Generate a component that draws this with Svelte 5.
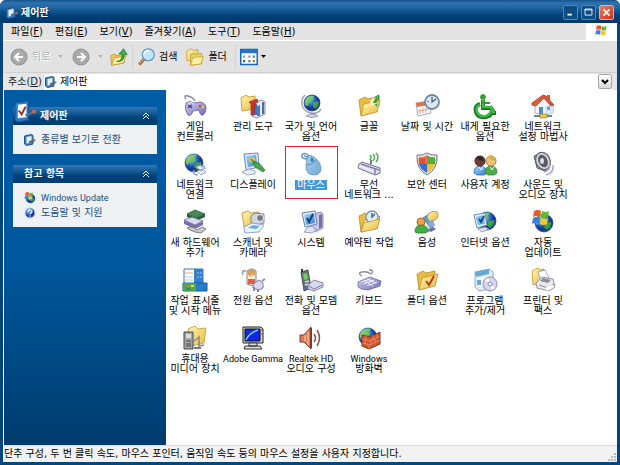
<script lang="ts">
	const folder = '<path d="M2 6l6-3 3 2 9-2v14L4 22z" fill="#e9bd45" stroke="#b98a26" stroke-width=".8"/><path d="M4 22l3-12 16-4-3 12z" fill="url(#gold)" stroke="#bd9030" stroke-width=".8"/>';
	const globe = '<circle cx="11" cy="11" r="9" fill="url(#sea)" stroke="#17479a" stroke-width=".7"/><path d="M5 5c3-3 7-3 9-2l-2 3 1 2-3 3-3-1-3 3c-2-3-1-6 1-8zM13 11l5-1c1 3-1 6-4 8l-3-3z" fill="url(#land)"/>';
	const monitor = '<path d="M3 3l13-2 2 13-12 3z" fill="#e8eef8" stroke="#6c7fae"/><path d="M5 5l10-2 1 10-9 2z" fill="url(#screen)"/><path d="M9 17l5-1 1 3 4 1-7 3-7-1z" fill="#dfe3f0" stroke="#8791ae" stroke-width=".8"/>';
	const flag = '<path d="M4 3q4-2 7 0l-1 6q-4-2-7 0z" fill="#ee5a24"/><path d="M12 3q4 2 7 0l-1 6q-4 2-7 0z" fill="#66b62e"/><path d="M3 10q4-2 7 0l-1 6q-4-2-7 0z" fill="#3c7fe0"/><path d="M11 10q4 2 7 0l-1 6q-4 2-7 0z" fill="#fbc42c"/>';
	const panel = '<path d="M1 3l14-2v20L4 23l-3-2z" fill="#2c7bc8" stroke="#1c4f91"/><path d="M4 5l9-1v14l-9 1z" fill="#fff"/><path d="M5 11l3 4 4-8" fill="none" stroke="#a72b2b" stroke-width="2"/><path d="M12 16l10-4" stroke="#5c7189" stroke-width="2.5"/><circle cx="21" cy="12" r="2" fill="#df613a"/>';
	const panelSmall = '<path d="M1 4l14-3 3 2v17L5 23l-4-3z" fill="#3c86cc" stroke="#1c4f91" stroke-width="2"/><path d="M5 6l10-2v13L5 19z" fill="#e6f2fc"/><path d="M10 17l12-5" stroke="#4c6685" stroke-width="4"/><circle cx="21" cy="12" r="2" fill="#d97a58"/>';
	const check = '<path d="M8 8l2 4 4-8" fill="none" stroke="#143d82" stroke-width="2"/>';

	const art: Record<string, string> = {
		panel,
		panelSmall,
		flag,
		game: '<path d="M3 5q-3-4 2-3t7 5" fill="none" stroke="#8a8aa8" stroke-width="1.5"/><path d="M3 9q4-3 8 0l6-1q6 1 6 6t-3 7q-3 1-4-5l-6 1q-2 6-5 4Q1 16 3 9z" fill="url(#violet)" stroke="#5f5b9d" stroke-width=".8"/><path d="M5 11l4 3M9 11l-4 3" stroke="#443f83" stroke-width="1.5"/><circle cx="17" cy="12" r="1.3" fill="#c44"/><circle cx="20" cy="13" r="1.3" fill="#e7c844"/><path d="M5 9q3-2 6 1" fill="none" stroke="#deddf8"/>',
		tools: '<path d="M0 4l5-3 3 2 6-1v13l-13 2z" fill="url(#gold)" stroke="#bb8b2c" stroke-width=".8"/><path d="M12 9l9-3 3 2v12l-8 4-5-2z" fill="#e6e9f6" stroke="#666ea0" stroke-width=".8"/><path d="M13 10h3v11h-3zM21 8h2v12h-2z" fill="#5368b8"/><path d="M8 8l8-3 1 3-3 2-1 11h-3V10z" fill="#c4392b" stroke="#842016" stroke-width=".6"/><path d="M16 12l3-1v11h-3z" fill="#3c80c7"/>',
		region: '<path d="M6 1C1 6 2 15 9 18s12 0 13-3" fill="none" stroke="#a0a5b8" stroke-width="1.5"/><circle cx="13" cy="9" r="8" fill="url(#sea)" stroke="#173b84" stroke-width=".7"/><path d="M8 4q3-3 7-2l-1 4-4 2-1 4-3-1q-1-4 2-7zM14 9l5-2q2 4-2 8l-3-2z" fill="url(#land)"/><path d="M12 19h3v2h-3z" fill="#87904f"/><path d="M7 22q6-4 12 0-6 3-12 0z" fill="#d7d9e3" stroke="#888ea4" stroke-width=".8"/>',
		fonts: '<path d="M18 3l4-2v11l-5 2z" fill="#2ea636" stroke="#167b23" stroke-width=".7"/>' + folder + '<path d="M13 7l3-3 2 1 3-3-1 7-6 3z" fill="#fff5bb"/><path d="M16 8l5-7-1 12z" fill="#36a637"/><path d="M6 13l14-4" stroke="#fff8bd"/>',
		clock: '<path d="M1 9l13-2 2 12-13 3z" fill="#fff" stroke="#8d93a8" stroke-width=".8"/><path d="M1 9l13-2 1 4-13 2z" fill="#df7444"/><path d="M5 15v5M8 14v5M11 14v5M3 17l11-2" stroke="#e4a084"/><circle cx="17" cy="8" r="7" fill="#dceaf7" stroke="#74899e" stroke-width="1.8"/><path d="M17 3v5l4-3" fill="none" stroke="#355878" stroke-width="1.2"/><path d="M12 7l2 1" stroke="#5f7c97"/>',
		access: '<circle cx="10" cy="3" r="2.5" fill="#32a635" stroke="#17751c" stroke-width=".6"/><path d="M10 6v8h8l3 5h2" fill="none" stroke="#15771e" stroke-width="4"/><path d="M7 10q-6 2-4 8t10 5q5-1 6-6" fill="none" stroke="#15771e" stroke-width="4"/><path d="M10 6v7h8l2 5h2M7 11q-5 2-3 7t9 4q4-1 5-5" fill="none" stroke="#3fb943" stroke-width="2.5"/><path d="M10 9h7" stroke="#2d9e31" stroke-width="2"/>',
		home: '<path d="M4 9l8-5 10 6v9l-9 2-9-2z" fill="#f8f8ff" stroke="#8591b0" stroke-width=".7"/><path d="M14 12l8-2v9l-8 2z" fill="#d7e5f4"/><path d="M1 9L12 1l3 1 8 9-3 1-7-8-8 8-4-1z" fill="#e35b38" stroke="#993420" stroke-width=".7"/><path d="M12 2l3 0 7 9-2 1-8-9z" fill="#d9522f"/><path d="M16 1h3v6l-3-3z" fill="#d45939"/><path d="M8 13h4v7H8z" fill="#4a8dcc"/><path d="M16 13l3-1v4h-3z" fill="#6ba0d4"/><path d="M3 22h18" stroke="#6d839b" stroke-width="2"/><path d="M9 20h7v4H9z" fill="#e9c849" stroke="#807a48" stroke-width=".6"/>',
		network: globe + '<path d="M13 15l5-2 4 3-4 3zM14 19l6-2 3 3-5 3z" fill="#e7ecf9" stroke="#8593b2" stroke-width=".8"/><path d="M11 18q-2 5 4 5M18 15q4-2 4 2" fill="none" stroke="#9aa8bd" stroke-width="1.5"/>',
		display: '<path d="M3 2l14-1 1 14-13 3z" fill="#dae7fb" stroke="#586da3" stroke-width=".8"/><path d="M5 4l10-1 1 10-9 2z" fill="url(#screen)"/><path d="M7 7l5-2 3 3-4 3z" fill="#f4c34b"/><path d="M1 20l7-3 6 2v3l-8 1z" fill="#e7ebf4" stroke="#8b97b5" stroke-width=".8"/><path d="M10 7l4 3-1 2zM14 10l4 1 6 7-2 2-8-5-2-3z" fill="#49a849" stroke="#227a2d" stroke-width=".7"/>',
		mouse: '<path d="M9 7C5 7 2 6 3 3s7-1 6 1-4 0-3-1" fill="none" stroke="#6298c5" stroke-width="1.5"/><path d="M8 6q2-4 5-2 8 4 9 12 0 7-7 7-8 0-8-9z" fill="url(#mouse)" stroke="#578fbd" stroke-width=".8"/><path d="M7 13q7 0 11-6M12 5l4 5" fill="none" stroke="#5d91bb"/><ellipse cx="13" cy="8" rx="1.5" ry="2.3" fill="#4782b0"/>',
		wireless: '<path d="M2 12l3-2 18 6v5l-5 2-17-7z" fill="#dfe0f2" stroke="#6e719a"/><path d="M4 12l18 6M18 17v5" stroke="#8080b0" stroke-width="1.5"/><path d="M14 12v-4" stroke="#777" stroke-width="2"/><path d="M13 3q2 2 0 5M16 2q3 3 0 7M19 1q4 4 0 9" fill="none" stroke="#3eb348" stroke-width="1.4"/><path d="M3 14l12 5" stroke="#fff"/>',
		shield: '<path d="M12 1q5 3 10 2 1 14-10 20Q1 17 2 3q5 1 10-2z" fill="#f0f0f0" stroke="#667286"/><path d="M12 3v9H4q-1-4 0-7 5 1 8-2z" fill="#ea4f2b"/><path d="M12 3q3 3 8 2 1 3 0 7h-8z" fill="#55ad3b"/><path d="M4 12h8v9q-7-4-8-9z" fill="#326fcb"/><path d="M12 12h8q-1 5-8 9z" fill="#f5bd2b"/><path d="M4 5q4 1 7-1v7" fill="none" stroke="#f79b77"/>',
		users: '<path d="M1 21q0-7 6-7t7 7l-3 2H4z" fill="url(#screen)" stroke="#235da6" stroke-width=".7"/><circle cx="7" cy="9" r="5" fill="#6e3d2c" stroke="#352b2a"/><path d="M2 8q3-7 8-2l1 3Q6 9 4 6z" fill="#332824"/><path d="M12 21q0-7 6-7t6 7l-3 2h-6z" fill="#4eac45" stroke="#277a30" stroke-width=".7"/><circle cx="18" cy="9" r="5" fill="#efc17b" stroke="#a97735"/><path d="M13 8q2-7 8-3l2 4q-5 0-7-3z" fill="#dcb049"/><path d="M6 15l2 3 2-3M17 15l2 3 2-3" fill="none" stroke="#fff"/>',
		sound: '<path d="M3 4l9-3 5 15-3 3-8-3z" fill="#b5b7c0" stroke="#555761"/><ellipse cx="12" cy="9" rx="7" ry="9" transform="rotate(-25 12 9)" fill="#d7d9df" stroke="#666875" stroke-width="1.3"/><ellipse cx="12" cy="9" rx="4.5" ry="6.5" transform="rotate(-25 12 9)" fill="#585a65"/><ellipse cx="11" cy="9" rx="2" ry="3" fill="#d9dce5"/><path d="M13 20q6-1 6-7M15 23q8-2 7-10" fill="none" stroke="#a5a4d3" stroke-width="1.5"/>',
		hardware: '<path d="M4 4l8-4 10 4-9 4z" fill="#468852" stroke="#244f31" stroke-width=".7"/><path d="M4 4v3l9 4 9-4V4l-9 4z" fill="#285f3d"/><path d="M1 10l8-3 11 4-8 4z" fill="#d9d8f1" stroke="#65618c" stroke-width=".7"/><path d="M1 10v4l11 5 8-4v-4l-8 4z" fill="#7872ac"/><path d="M4 18q6-3 10 2l5-3 4 2-5 4-6-1-5-2z" fill="#c9cace" stroke="#666" stroke-width=".8"/>',
		scanner: '<path d="M1 3l6-2 3 2 8-1v13L3 17z" fill="url(#gold)" stroke="#bd8d2c" stroke-width=".8"/><path d="M10 6l4-3 9 1v9l-8 2-5-3z" fill="#d4d5db" stroke="#70717e" stroke-width=".8"/><circle cx="19" cy="8" r="3.5" fill="#73798a" stroke="#eee"/><path d="M3 17l8-4 12 2-5 7-14 1z" fill="#f0f4fc" stroke="#7d92b6" stroke-width=".8"/><path d="M7 18l5-3 7 1-4 3z" fill="#64aee8"/>',
		system: '<path d="M14 4l8-2 2 2v14l-8 4-4-2z" fill="#c5c7e4" stroke="#6a6897" stroke-width=".7"/><path d="M20 5l3-1v13l-3 2z" fill="#7470a9"/>' + monitor + check,
		tasks: folder + '<circle cx="15" cy="7" r="6" fill="#e2eef4" stroke="#8299a6" stroke-width="1.5"/><path d="M15 3v4l3-3" fill="none" stroke="#456d8d" stroke-width="1.5"/><path d="M4 22l3-9 16-4-3 10z" fill="url(#gold)" stroke="#bd9030" stroke-width=".8"/>',
		speech: '<path d="M8 8l8-5 4 4-5 10z" fill="#50a6de" stroke="#327bab"/><path d="M14 3q4-3 8-1 3 5-2 8l-5 2-3-5z" fill="url(#gold)" stroke="#bd852d" stroke-width=".8"/><path d="M12 15l5-6 3 6-4 5z" fill="#86a9cd"/><circle cx="6" cy="12" r="4" fill="#f2a14a" stroke="#b66423"/><path d="M0 22q0-7 6-7t8 6l-4 2H3z" fill="#48ae42" stroke="#238034" stroke-width=".8"/><path d="M12 20l6-3 3 2-5 3z" fill="#706daf"/>',
		internet: '<g transform="translate(3 0)">' + globe + '</g><path d="M1 5l11-2 2 12-10 3z" fill="#e8f1fb" stroke="#6787b3"/><path d="M3 7l8-2 1 9-7 1z" fill="#73b9ea"/><path d="M6 9l2 3 3-6" fill="none" stroke="#17488c" stroke-width="2"/><path d="M5 19l7-2 4 2-7 3z" fill="#dce0ee" stroke="#848ca8" stroke-width=".8"/>',
		update: '<g transform="translate(2 2)">' + globe + '</g><g transform="translate(-1 -2)">' + flag + '</g>',
		taskbar: '<path d="M1 1h19v15H1z" fill="#fff" stroke="#2f79bf"/><path d="M11 1h9v14h-9z" fill="#347fc5"/><path d="M2 5h8" stroke="#f0a46e"/><path d="M2 9h8M2 12h8" stroke="#a9cbe6"/><path d="M14 5h2M17 5h2M14 9h2M17 9h2" stroke="#9cc9ee"/><path d="M0 15h24v8H0z" fill="#247fcb" stroke="#185b9e"/><path d="M0 15h13v8H0z" fill="#4ba643"/><path d="M4 17h3v2H4z" fill="#ed6932"/><path d="M8 17h3v2H8z" fill="#e9d84c"/><path d="M4 20h3v2H4z" fill="#2876c9"/>',
		power: '<path d="M2 7Q0 2 5 3" fill="none" stroke="#aaa" stroke-width="2"/><path d="M6 3q5-4 9 0v13q-5 3-9 0z" fill="#eee" stroke="#8c8177"/><path d="M7 3q4-3 7 0v4q-4 2-7 0z" fill="#d29b68"/><path d="M7 11h7v5H7z" fill="#dc6147"/><path d="M9 9l3-4" stroke="#f7c52e" stroke-width="2"/><path d="M12 16l6-4 4 3v5l-4 2-6-2z" fill="#d6d7ee" stroke="#7778a6"/><path d="M13 19v4M17 21v3M21 13l3-2" stroke="#8687b2" stroke-width="2"/>',
		phone: '<path d="M3 1v6" stroke="#333" stroke-width="2"/><path d="M2 4l7-2 3 18-7 3z" fill="#65717b" stroke="#354049" stroke-width=".8"/><path d="M4 6l4-1 1 6-4 1z" fill="#71ce54"/><path d="M6 14l4-1M6 17l4-1" stroke="#ddd" stroke-width="1.5"/><path d="M9 17l6-5 9 3v4l-9 4-6-2z" fill="#d8d8f0" stroke="#6b6797" stroke-width=".8"/><path d="M10 18l5 3 8-4" fill="none" stroke="#7975ae"/>',
		keyboard: '<path d="M5 8Q0 5 5 4t9 2q4-4-2-4" fill="none" stroke="#888ba4" stroke-width="1.3"/><path d="M1 14l12-5 11 4-1 5-12 4q-10-1-10-4z" fill="url(#violet)" stroke="#686797" stroke-width=".8"/><path d="M4 14l9-3M7 16l10-4M10 18l10-4M8 13l8 5M12 12l7 3" stroke="#f5f5ff" stroke-width="1"/>',
		options: folder + '<path d="M11 13l3 4 5-9" fill="none" stroke="#b93725" stroke-width="2"/>',
		programs: '<path d="M2 4l14-3 4 3v16L6 23l-4-4z" fill="#e4edf7" stroke="#7995b6" stroke-width=".8"/><path d="M2 4l14-3v5L3 9z" fill="#67a8d6"/><path d="M5 10l11-2v9L5 19z" fill="#fff"/><path d="M4 12h4v5H4z" fill="#64a8dc"/><circle cx="17" cy="16" r="7" fill="#d6d6f0" stroke="#8b8ab9"/><path d="M17 16l-5-4 3-2zM17 16l5 4-3 2z" fill="#fff"/><circle cx="17" cy="16" r="2" fill="#fff" stroke="#8588aa"/>',
		printer: '<path d="M1 3l6-3 2 2 4-1v13L2 17z" fill="url(#gold)" stroke="#bd9030" stroke-width=".8"/><path d="M7 4l7-2 4 8-8 3z" fill="#fff" stroke="#7f9bb3" stroke-width=".8"/><path d="M5 15l6-6 11 2 2 8-6 4-12-3z" fill="#e9e9ed" stroke="#7c7d87" stroke-width=".8"/><path d="M9 13l3-3 8 2-3 3z" fill="#888b97"/><path d="M8 17l9 3 6-4" fill="none" stroke="#8d8e99"/><path d="M14 20l7-3 2 2-7 4z" fill="#fff"/>',
		media: '<path d="M5 3l7-3 3 3 8-1-2 15-12 3z" fill="url(#gold)" stroke="#c09431" stroke-width=".8"/><path d="M1 6h9v17H1z" fill="#a3a5a6" stroke="#454a4c"/><path d="M3 8h5v4H3z" fill="#ddd"/><path d="M3 15h5M3 18h5M3 20h5" stroke="#434849"/><path d="M11 15l5-4v9l5-1" fill="none" stroke="#888" stroke-width="1.5"/><path d="M11 21h7v2h-7z" fill="#777"/>',
		gamma: '<path d="M2 1h18l2 2v14H2z" fill="#d7d7d7" stroke="#222"/><path d="M4 3h15v12H4z" fill="#1026e0" stroke="#111"/><path d="M5 14Q8 7 17 4" fill="none" stroke="#7ad2ff" stroke-width="1.5"/><path d="M8 17h8v3H8zM4 20h15l2 3H3z" fill="#ddd" stroke="#333"/><path d="M20 4h2M20 8h2" stroke="#555"/>',
		realtek: '<path d="M1 9h4l7-8v22l-7-7H1z" fill="#df7b55" stroke="#753829"/><path d="M6 9v7M9 6v13" stroke="#f6b590" stroke-width="1.5"/><path d="M12 2v20" stroke="#843928" stroke-width="2"/><path d="M15 8q3 4 0 8M18 4q5 8 0 16" fill="none" stroke="#8c5040" stroke-width="1.5"/>',
		firewall: globe + '<path d="M5 9l8 2 10-5v12l-11 5-7-3z" fill="#d0552c" stroke="#81341e"/><path d="M5 13l8 2 10-5M5 17l8 2 10-5M9 10v4M8 14v4M16 9v5M20 8v4M18 13v4M14 14v5M12 19v4" fill="none" stroke="#f3a67c" stroke-width=".6"/>',
		search: '<path d="M10 14l-7 8" stroke="#9a5839" stroke-width="4"/><path d="M10 14l-7 7" stroke="#d99461" stroke-width="2"/><circle cx="15" cy="9" r="8" fill="#bfe6fa" stroke="#5b8dbb" stroke-width="1.5"/><path d="M9 9q1-6 7-5" fill="none" stroke="#fff" stroke-width="2"/>',
		folders: '<path d="M1 4l6-3 3 2 6-1v13L1 17z" fill="url(#gold)" stroke="#c69b32"/><path d="M6 9l5-2 2 2 8-2v14L6 23z" fill="#edcf61" stroke="#c69b32"/><path d="M6 23l3-10 14-2-3 10z" fill="#fff1a4" stroke="#c69b32"/>',
		up: '<path d="M1 10l5-2 3 2 10-2v12L2 23z" fill="#e9c753" stroke="#b99939"/><path d="M2 23l4-10 15-2-3 9z" fill="#fff0a1" stroke="#b99939"/><path d="M9 18q8-1 7-10h-4l6-7 5 8h-4q0 10-10 9z" fill="#3fb144" stroke="#157b26"/>',
		help: '<circle cx="12" cy="12" r="10" fill="url(#sea)" stroke="#bacff0" stroke-width="2"/><path d="M8 9q1-4 5-3 5 1 2 5l-3 3" fill="none" stroke="#fff" stroke-width="2.5"/><circle cx="12" cy="18" r="1.5" fill="#fff"/>',
		views: '<path d="M1 2h22v20H1z" fill="#fff" stroke="#1766b9" stroke-width="2"/><path d="M1 2h22v5H1z" fill="#2475ca"/><path d="M4 10h3v3H4z" fill="#7da9c4"/><path d="M11 10h3v3h-3z" fill="#dd816e"/><path d="M17 10h3v3h-3z" fill="#4f80c2"/><path d="M4 16h3v3H4z" fill="#405f9f"/><path d="M11 16h3v3h-3z" fill="#509158"/><path d="M17 16h3v3h-3z" fill="#a08a3a"/>'
	};

	const menus = [
		['파일', 'F'], ['편집', 'E'], ['보기', 'V'], ['즐겨찾기', 'A'], ['도구', 'T'], ['도움말', 'H']
	];

	const items = [
		{ icon: 'game', lines: ['게임', '컨트롤러'] },
		{ icon: 'tools', lines: ['관리 도구'] },
		{ icon: 'region', lines: ['국가 및 언어', '옵션'] },
		{ icon: 'fonts', lines: ['글꼴'] },
		{ icon: 'clock', lines: ['날짜 및 시간'] },
		{ icon: 'access', lines: ['내게 필요한', '옵션'] },
		{ icon: 'home', lines: ['네트워크', '설정 마법사'] },
		{ icon: 'network', lines: ['네트워크', '연결'] },
		{ icon: 'display', lines: ['디스플레이'] },
		{ icon: 'mouse', lines: ['마우스'] },
		{ icon: 'wireless', lines: ['무선', '네트워크 ...'] },
		{ icon: 'shield', lines: ['보안 센터'] },
		{ icon: 'users', lines: ['사용자 계정'] },
		{ icon: 'sound', lines: ['사운드 및', '오디오 장치'] },
		{ icon: 'hardware', lines: ['새 하드웨어', '추가'] },
		{ icon: 'scanner', lines: ['스캐너 및', '카메라'] },
		{ icon: 'system', lines: ['시스템'] },
		{ icon: 'tasks', lines: ['예약된 작업'] },
		{ icon: 'speech', lines: ['음성'] },
		{ icon: 'internet', lines: ['인터넷 옵션'] },
		{ icon: 'update', lines: ['자동', '업데이트'] },
		{ icon: 'taskbar', lines: ['작업 표시줄', '및 시작 메뉴'] },
		{ icon: 'power', lines: ['전원 옵션'] },
		{ icon: 'phone', lines: ['전화 및 모뎀', '옵션'] },
		{ icon: 'keyboard', lines: ['키보드'] },
		{ icon: 'options', lines: ['폴더 옵션'] },
		{ icon: 'programs', lines: ['프로그램', '추가/제거'] },
		{ icon: 'printer', lines: ['프린터 및', '팩스'] },
		{ icon: 'media', lines: ['휴대용', '미디어 장치'] },
		{ icon: 'gamma', lines: ['Adobe Gamma'] },
		{ icon: 'realtek', lines: ['Realtek HD', '오디오 구성'] },
		{ icon: 'firewall', lines: ['Windows', '방화벽'] }
	];

	let selected = $state('mouse');
	let address = $state('제어판');
	let open = $state({ tasks: true, related: true });
	const isLatin = (text: string) => /^[A-Za-z ]+$/.test(text);
</script>

{#snippet icon(name: string)}
	<svg class="icon" viewBox="0 0 24 24" aria-hidden="true">{@html art[name]}</svg>
{/snippet}

{#snippet chevrons()}
	<svg class="chevrons" viewBox="0 0 8 8" aria-hidden="true"><path d="M1 4l3-3 3 3M1 7l3-3 3 3" /></svg>
{/snippet}

{#snippet caret()}
	<svg class="caret" viewBox="0 0 5 3" aria-hidden="true"><path d="M0 0h5L2.5 3z" /></svg>
{/snippet}

<div class="window">
	<svg class="defs" width="0" height="0" aria-hidden="true">
		<defs>
			<linearGradient id="gold" x2="1" y2="1"><stop stop-color="#fff7b5" /><stop offset="1" stop-color="#e8b93c" /></linearGradient>
			<radialGradient id="sea" cx=".35" cy=".3"><stop stop-color="#8fd0ff" /><stop offset=".6" stop-color="#2b73d2" /><stop offset="1" stop-color="#16398f" /></radialGradient>
			<linearGradient id="land" x2="1" y2="1"><stop stop-color="#a1e47a" /><stop offset="1" stop-color="#23852f" /></linearGradient>
			<linearGradient id="screen" x2="1" y2="1"><stop stop-color="#a5dcff" /><stop offset="1" stop-color="#2e7cd3" /></linearGradient>
			<linearGradient id="violet" x2="1" y2="1"><stop stop-color="#d5d4f4" /><stop offset="1" stop-color="#706cae" /></linearGradient>
			<linearGradient id="mouse" x2="1" y2="1"><stop stop-color="#a8d2ef" /><stop offset="1" stop-color="#6fa8d6" /></linearGradient>
		</defs>
	</svg>

	<header class="titlebar">
		{@render icon('panelSmall')}
		<h1>제어판</h1>
		<button aria-label="최소화"><svg viewBox="0 0 15 15"><path d="M4 10h5" /></svg></button>
		<button aria-label="최대화"><svg viewBox="0 0 15 15"><path class="thin" d="M3.5 3.5h8v7h-8zM3 4.5h9" /></svg></button>
		<button class="close" aria-label="닫기"><svg viewBox="0 0 15 15"><path d="M4 4l7 7M11 4l-7 7" /></svg></button>
	</header>

	<nav class="menubar">
		{#each menus as [label, key] (key)}
			<button>{label}(<u>{key}</u>)</button>
		{/each}
		<div class="brand">{@render icon('flag')}</div>
	</nav>

	<div class="toolbar">
		<button class="back" disabled>
			<svg class="round" viewBox="0 0 18 18" aria-hidden="true"><circle cx="9" cy="9" r="8" /><path d="M13 9H5M9 5L5 9l4 4" /></svg>
			뒤로 {@render caret()}
		</button>
		<button class="forward" aria-label="앞으로" disabled>
			<svg class="round" viewBox="0 0 18 18" aria-hidden="true"><circle cx="9" cy="9" r="8" /><path d="M5 9h8M9 5l4 4-4 4" /></svg>
			{@render caret()}
		</button>
		<button aria-label="위로">{@render icon('up')}</button>
		<span class="rule"></span>
		<button>{@render icon('search')}검색</button>
		<button class="folders">{@render icon('folders')}폴더</button>
		<span class="rule"></span>
		<button class="views" aria-label="보기">{@render icon('views')}{@render caret()}</button>
	</div>

	<div class="address">
		<label for="address">주소(<u>D</u>)</label>
		<div class="field">
			{@render icon('panelSmall')}
			<input id="address" bind:value={address} />
			<button aria-label="주소 목록"><svg viewBox="0 0 8 8"><path d="M1 2l3 3 3-3" /></svg></button>
		</div>
	</div>

	<div class="content">
		<aside>
			<section>
				<button class="head main" onclick={() => (open.tasks = !open.tasks)}>
					{@render icon('panel')}<span>제어판</span>{@render chevrons()}
				</button>
				{#if open.tasks}
					<div class="links">
						<a href="#category">{@render icon('panelSmall')}종류별 보기로 전환</a>
					</div>
				{/if}
			</section>
			<section>
				<button class="head" onclick={() => (open.related = !open.related)}>
					<span>참고 항목</span>{@render chevrons()}
				</button>
				{#if open.related}
					<div class="links">
						<a href="#update" class="latin">{@render icon('update')}Windows Update</a>
						<a href="#help">{@render icon('help')}도움말 및 지원</a>
					</div>
				{/if}
			</section>
		</aside>

		<main>
			{#each items as item (item.icon)}
				<button class="item" class:selected={selected === item.icon} onclick={() => (selected = item.icon)}>
					{@render icon(item.icon)}
					<span class="label">
						{#each item.lines as line (line)}
							<span class:latin={isLatin(line)}>{line}</span>
						{/each}
					</span>
				</button>
			{/each}
		</main>
	</div>

	<footer>
		<span>단추 구성, 두 번 클릭 속도, 마우스 포인터, 움직임 속도 등의 마우스 설정을 사용자 지정합니다.</span>
		<svg class="grip" viewBox="0 0 9 9" aria-hidden="true"><path d="M7 1h2M4 4h2M7 4h2M1 7h2M4 7h2M7 7h2" /></svg>
	</footer>
</div>

<style>
	:global(body) { margin: 0; background: #fff; }
	.window { display: flex; flex-direction: column; box-sizing: border-box; min-height: 100vh; padding: 0 3px 3px; border-radius: 6px 6px 0 0; background: #04457c; color: #000; font: 10px/12px "DejaVu Sans", "Noto Sans CJK KR", sans-serif; overflow: hidden; }
	.defs { display: block; flex: none; }
	button, input { margin: 0; padding: 0; border: 0; background: none; color: inherit; font: inherit; }
	button { white-space: nowrap; }
	.icon { display: block; flex: none; width: 12px; height: 12px; overflow: visible; }
	.latin { font-family: Roboto, "Liberation Sans", sans-serif; font-size: 9px; }

	.titlebar { display: flex; align-items: center; gap: 3px; height: 23px; margin: 0 -3px; padding: 2px 6px 0; box-sizing: border-box; background: linear-gradient(#15548c, #2d72b0 3px, #2468a5 7px, #00447b 15px, #003866); }
	.titlebar h1 { flex: 1; margin: 0; color: #fff; font: inherit; font-weight: 700; text-shadow: 1px 1px #00294d; }
	.titlebar button { width: 15px; height: 15px; border: 1px solid #4d8cc3; border-radius: 2px; background: #0c4d84; }
	.titlebar button svg { display: block; width: 13px; height: 13px; fill: none; stroke: #fff; stroke-width: 2; }
	.titlebar .thin { stroke-width: 1; }
	.titlebar .close { border-color: #f0a895; background: linear-gradient(135deg, #ed8068, #c93017); }

	.menubar { display: flex; align-items: center; gap: 12px; height: 18px; padding-left: 8px; background: #e3e3e3; border-bottom: 1px solid #fff; box-sizing: border-box; }
	.brand { display: grid; place-items: center; align-self: stretch; width: 31px; margin-left: auto; background: #fff; }
	.brand .icon { width: 16px; height: 16px; }

	.toolbar { display: flex; align-items: center; height: 32px; padding-left: 7px; box-sizing: border-box; border-bottom: 1px solid #cfcfcf; background: #e2e2e2; }
	.toolbar button { display: flex; align-items: center; gap: 4px; }
	.toolbar .icon { width: 18px; height: 18px; }
	.toolbar .back { width: 62px; color: #b4b4b4; text-shadow: 1px 1px #fff; }
	.toolbar .forward { width: 38px; gap: 8px; color: #b4b4b4; }
	.toolbar .back .caret { margin-left: 4px; }
	.toolbar .folders { margin: 0 4px 0 9px; }
	.toolbar .views { gap: 3px; }
	.round { width: 18px; height: 18px; }
	.round circle { fill: #aaa; stroke: #8e8e8e; }
	.round path { fill: none; stroke: #fff; stroke-width: 2; }
	.caret { width: 5px; height: 3px; fill: currentColor; }
	.rule { width: 1px; height: 26px; margin: 0 4px; background: #d3d3d3; }

	.address { display: flex; align-items: center; gap: 2px; height: 17px; padding: 0 5px; background: #e6e6e6; }
	.address label { color: #222; }
	.field { display: flex; flex: 1; align-items: center; gap: 3px; height: 16px; padding-left: 1px; background: #fff; }
	.field input { flex: 1; min-width: 0; outline: 0; }
	.field button { width: 14px; height: 15px; border: 1px solid #a5a5a5; border-radius: 2px; background: linear-gradient(#fff, #d8d8d8); box-sizing: border-box; }
	.field button svg { display: block; width: 8px; height: 8px; margin: auto; fill: none; stroke: #000; stroke-width: 2; }

	.content { display: flex; flex: 1; padding-left: 1px; background: #fff; }
	aside { display: flex; flex: none; flex-direction: column; gap: 11px; width: 162px; padding: 17px 9px; box-sizing: border-box; background: linear-gradient(#005ca6, #00579b 50%, #003c6f); }
	.head { display: flex; align-items: center; width: 100%; height: 18px; padding: 0 7px 0 11px; background: linear-gradient(#3379b5, #00427a 60%, #003c70); color: #fff; font-weight: 700; text-align: left; }
	.head span { flex: 1; }
	.head.main { gap: 3px; padding-left: 1px; }
	.head.main .icon { width: 23px; height: 23px; margin-top: -10px; }
	.chevrons { width: 8px; height: 8px; fill: none; stroke: #fff; stroke-width: 1; }
	.links { padding: 7px 11px; background: #eef1f4; }
	.links a { display: flex; align-items: center; gap: 5px; height: 15px; color: #1c4f80; text-decoration: none; white-space: nowrap; }

	main { display: grid; flex: 1; grid-template-columns: repeat(auto-fill, 58px); grid-auto-rows: 58px; align-content: start; padding-top: 4px; }
	.item { position: relative; display: flex; flex-direction: column; align-items: center; gap: 4px; line-height: 10px; }
	.item .icon { width: 24px; height: 24px; }
	.label span { display: block; }
	.selected .label { padding: 0 2px; background: #4797dd; color: #fff; }
	.selected::after { content: ""; position: absolute; inset: -6px 2px 11px 3px; border: 1px solid #d8242c; }

	footer { display: flex; align-items: center; justify-content: space-between; height: 17px; padding: 0 1px; border-top: 1px solid #ddd; box-sizing: border-box; background: #f2f2f2; }
	.grip { align-self: flex-end; width: 9px; height: 9px; stroke: #bbb; stroke-width: 2; }
</style>
